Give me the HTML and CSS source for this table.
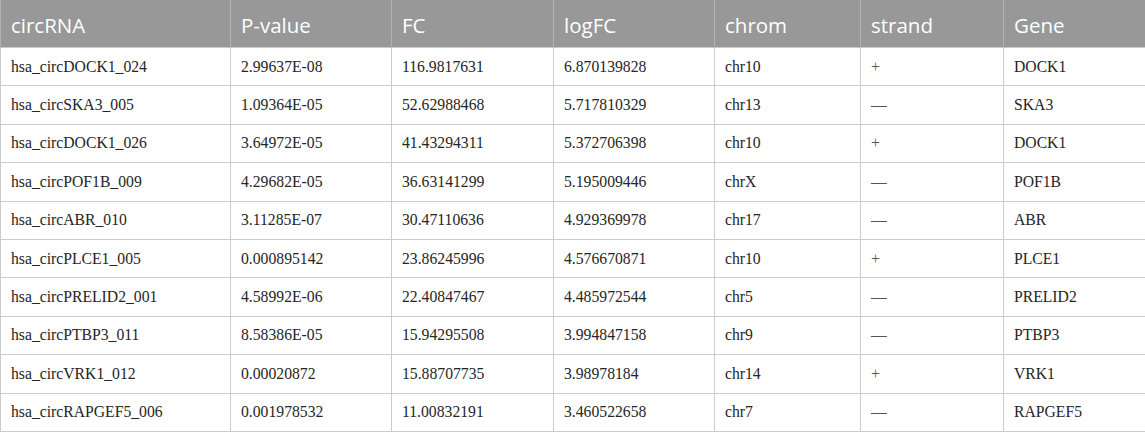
FILE: index.html
```html
<!DOCTYPE html>
<html>
<head>
<meta charset="utf-8">
<link rel="stylesheet" href="styles.css">
</head>
<body>
<table class="data">
  <colgroup>
    <col class="c1"><col class="c2"><col class="c3"><col class="c4"><col class="c5"><col class="c6"><col class="c7">
  </colgroup>
  <thead>
    <tr><th>circRNA</th><th>P-value</th><th>FC</th><th>logFC</th><th>chrom</th><th>strand</th><th>Gene</th></tr>
  </thead>
  <tbody>
    <tr><td>hsa_circDOCK1_024</td><td>2.99637E-08</td><td>116.9817631</td><td>6.870139828</td><td>chr10</td><td>+</td><td>DOCK1</td></tr>
    <tr><td>hsa_circSKA3_005</td><td>1.09364E-05</td><td>52.62988468</td><td>5.717810329</td><td>chr13</td><td>—</td><td>SKA3</td></tr>
    <tr><td>hsa_circDOCK1_026</td><td>3.64972E-05</td><td>41.43294311</td><td>5.372706398</td><td>chr10</td><td>+</td><td>DOCK1</td></tr>
    <tr><td>hsa_circPOF1B_009</td><td>4.29682E-05</td><td>36.63141299</td><td>5.195009446</td><td>chrX</td><td>—</td><td>POF1B</td></tr>
    <tr><td>hsa_circABR_010</td><td>3.11285E-07</td><td>30.47110636</td><td>4.929369978</td><td>chr17</td><td>—</td><td>ABR</td></tr>
    <tr><td>hsa_circPLCE1_005</td><td>0.000895142</td><td>23.86245996</td><td>4.576670871</td><td>chr10</td><td>+</td><td>PLCE1</td></tr>
    <tr><td>hsa_circPRELID2_001</td><td>4.58992E-06</td><td>22.40847467</td><td>4.485972544</td><td>chr5</td><td>—</td><td>PRELID2</td></tr>
    <tr><td>hsa_circPTBP3_011</td><td>8.58386E-05</td><td>15.94295508</td><td>3.994847158</td><td>chr9</td><td>—</td><td>PTBP3</td></tr>
    <tr><td>hsa_circVRK1_012</td><td>0.00020872</td><td>15.88707735</td><td>3.98978184</td><td>chr14</td><td>+</td><td>VRK1</td></tr>
    <tr><td>hsa_circRAPGEF5_006</td><td>0.001978532</td><td>11.00832191</td><td>3.460522658</td><td>chr7</td><td>—</td><td>RAPGEF5</td></tr>
  </tbody>
</table>
</body>
</html>
```
FILE: styles.css
```css
html, body {
  margin: 0;
  padding: 0;
  background: #ffffff;
}
.data {
  width: 1145px;
  border-collapse: collapse;
  table-layout: fixed;
}
.c1 { width: 230px; }
.c2 { width: 161px; }
.c3 { width: 162px; }
.c4 { width: 161px; }
.c5 { width: 146px; }
.c6 { width: 143px; }
.c7 { width: 142px; }
.data th {
  height: 45px;
  padding: 2px 0 0 10px;
  background: #989898;
  color: #ffffff;
  font-family: "Open Sans", "Noto Sans", sans-serif;
  font-weight: 400;
  font-size: 20.5px;
  line-height: 24px;
  text-align: left;
  vertical-align: middle;
  border-left: 1px solid #b3b3b3;
  border-right: 1px solid #b3b3b3;
}
.data td {
  height: 37.4px;
  padding: 0 0 0 10px;
  color: #262626;
  font-family: "Liberation Serif", "DejaVu Serif", serif;
  font-size: 15.7px;
  line-height: 18px;
  text-align: left;
  vertical-align: middle;
  border: 1px solid #cccccc;
  white-space: nowrap;
}
.data td:nth-child(6) {
  color: #555555;
}
```
